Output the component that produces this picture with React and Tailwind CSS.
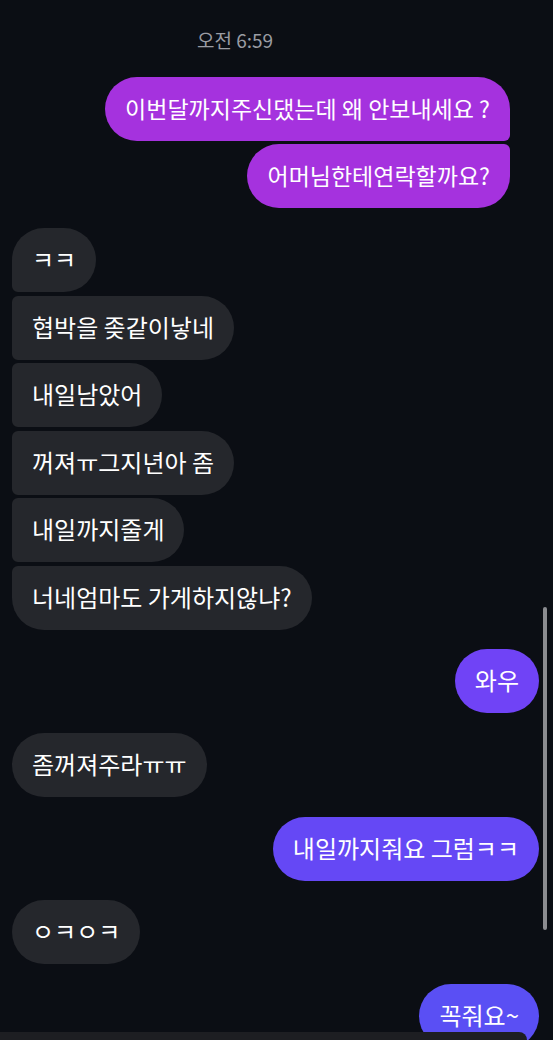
import React from "react";

const FONT = { fontFamily: '"Noto Sans CJK KR", "Noto Sans", sans-serif' };

const Sent = ({ children, className = "" }) => (
  <div className={`h-16 flex items-center px-5 text-white leading-none ${className}`}>
    <span className="-mt-0.5">{children}</span>
  </div>
);

const Received = ({ children, className = "" }) => (
  <div className={`h-16 flex items-center px-5 text-[24px] text-white leading-none bg-[#25272c] ${className}`}>
    <span className="-mt-0.5">{children}</span>
  </div>
);

export default function App() {
  return (
    <div className="relative h-[1040px] w-full overflow-hidden bg-[#0b0e14]" style={FONT}>
      <div className="pt-[28px] pl-[197px] text-[19px] leading-[24px] text-[#9a9ca3]">
        오전 6:59
      </div>

      {/* first sent group */}
      <div className="mt-[25px] flex flex-col items-end gap-[3px] pr-[43px]">
        <Sent className="text-[23px] bg-[#a532de] rounded-[32px] rounded-br-[6px]">
          이번달까지주신댔는데 왜 안보내세요 ?
        </Sent>
        <Sent className="text-[23px] bg-[#a532de] rounded-[32px] rounded-tr-[6px]">
          어머님한테연락할까요?
        </Sent>
      </div>

      {/* received group */}
      <div className="mt-[20px] flex flex-col items-start gap-[3.5px] pl-3">
        <Received className="rounded-[32px] rounded-bl-[6px]">ㅋㅋ</Received>
        <Received className="rounded-r-[32px] rounded-l-[6px]">협박을 좆같이낳네</Received>
        <Received className="rounded-r-[32px] rounded-l-[6px]">내일남았어</Received>
        <Received className="rounded-r-[32px] rounded-l-[6px]">꺼져ㅠ그지년아 좀</Received>
        <Received className="rounded-r-[32px] rounded-l-[6px]">내일까지줄게</Received>
        <Received className="rounded-[32px] rounded-tl-[6px]">너네엄마도 가게하지않냐?</Received>
      </div>

      <div className="mt-[19px] flex justify-end pr-[14px]">
        <Sent className="text-[24px] bg-[#7043f6] rounded-[32px]">와우</Sent>
      </div>

      <div className="mt-[20px] flex pl-3">
        <Received className="rounded-[32px]">좀꺼져주라ㅠㅠ</Received>
      </div>

      <div className="mt-[20px] flex justify-end pr-[14px]">
        <Sent className="text-[24px] bg-[#6548f5] rounded-[32px]">내일까지줘요 그럼ㅋㅋ</Sent>
      </div>

      <div className="mt-[19px] flex pl-3">
        <Received className="rounded-[32px]">ㅇㅋㅇㅋ</Received>
      </div>

      <div className="mt-[20px] flex justify-end pr-[14px]">
        <Sent className="text-[24px] bg-[#5a4ff4] rounded-[32px]">꼭줘요~</Sent>
      </div>

      {/* scrollbar */}
      <div className="absolute left-[543px] top-[607px] h-[323px] w-[4px] rounded-full bg-[#8b8c90]" />

      {/* composer edge */}
      <div className="absolute bottom-0 left-0 h-[8px] w-[527px] rounded-tr-[14px] bg-[#1d1e22]" />
    </div>
  );
}
